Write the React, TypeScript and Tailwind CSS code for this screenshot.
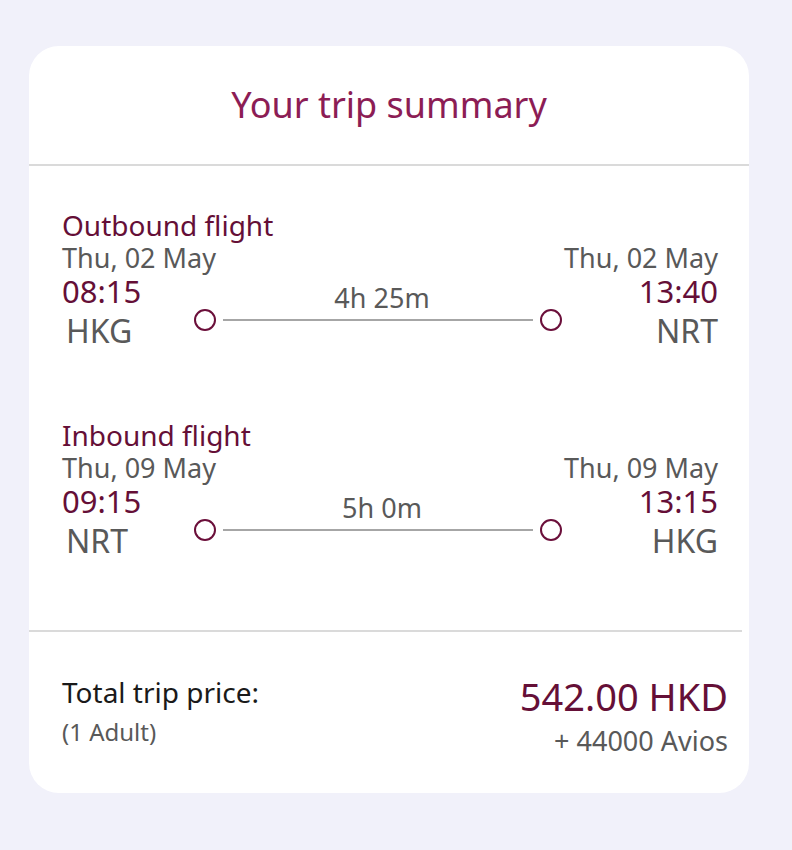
import { FC } from "react";

interface FlightProps {
  label: string;
  fromDate: string;
  fromTime: string;
  fromCode: string;
  toDate: string;
  toTime: string;
  toCode: string;
  duration: string;
}

const Flight: FC<FlightProps> = ({
  label,
  fromDate,
  fromTime,
  fromCode,
  toDate,
  toTime,
  toCode,
  duration,
}) => (
  <div>
    <div className="mt-[2px] text-[28px] leading-[31px] text-[#650f37]">{label}</div>
    <div className="flex justify-between text-[27px] leading-[33px] text-[#595959]">
      <span>{fromDate}</span>
      <span>{toDate}</span>
    </div>
    <div className="flex">
      <div className="w-[132px]">
        <div className="text-[31px] leading-[34px] text-[#650f37]">{fromTime}</div>
        <div className="mt-[3px] pl-1 text-[32px] leading-[40px] text-[#595959]">
          {fromCode}
        </div>
      </div>
      <div className="flex-1 pt-[13px]">
        <div className="pl-2 text-center text-[27px] leading-[22px] text-[#595959]">
          {duration}
        </div>
        <div className="flex items-center">
          <div className="h-[22px] w-[22px] shrink-0 rounded-full border-2 border-[#6b0f3a]" />
          <div className="mx-[7px] h-[2px] flex-1 bg-[#a6a6a6]" />
          <div className="h-[22px] w-[22px] shrink-0 rounded-full border-2 border-[#6b0f3a]" />
        </div>
      </div>
      <div className="w-[156px] text-right">
        <div className="text-[31px] leading-[34px] text-[#650f37]">{toTime}</div>
        <div className="mt-[3px] text-[32px] leading-[40px] text-[#595959]">{toCode}</div>
      </div>
    </div>
  </div>
);

const App: FC = () => {
  return (
    <div
      className="min-h-[850px] bg-[#f1f1fa] pt-[46px] pl-[29px]"
      style={{ fontFamily: '"Noto Sans", "Open Sans", sans-serif' }}
    >
      <div className="w-[720px] overflow-hidden rounded-[30px] bg-white">
        <div className="flex h-[120px] items-center justify-center border-b-2 border-[#dadada]">
          <h1 className="text-[36px] leading-[42px] text-[#8c1d55]">Your trip summary</h1>
        </div>

        <div className="space-y-[69px] pt-[42px] pb-[69px] pl-[33px] pr-[31px]">
          <Flight
            label="Outbound flight"
            fromDate="Thu, 02 May"
            fromTime="08:15"
            fromCode="HKG"
            toDate="Thu, 02 May"
            toTime="13:40"
            toCode="NRT"
            duration="4h 25m"
          />
          <Flight
            label="Inbound flight"
            fromDate="Thu, 09 May"
            fromTime="09:15"
            fromCode="NRT"
            toDate="Thu, 09 May"
            toTime="13:15"
            toCode="HKG"
            duration="5h 0m"
          />
        </div>

        <div className="mr-[7px] h-[2px] bg-[#dadada]" />

        <div className="flex h-[161px] justify-between pt-[42px] pl-[33px] pr-[21px]">
          <div>
            <div className="text-[28px] leading-[36px] text-[#1a1a1a]">Total trip price:</div>
            <div className="mt-[4px] text-[24px] leading-[36px] text-[#595959]">(1 Adult)</div>
          </div>
          <div className="text-right">
            <div className="text-[38px] leading-[44px] text-[#650f37]">542.00 HKD</div>
            <div className="mt-[5px] text-[27px] leading-[36px] text-[#595959]">
              + 44000 Avios
            </div>
          </div>
        </div>
      </div>
    </div>
  );
};

export default App;
